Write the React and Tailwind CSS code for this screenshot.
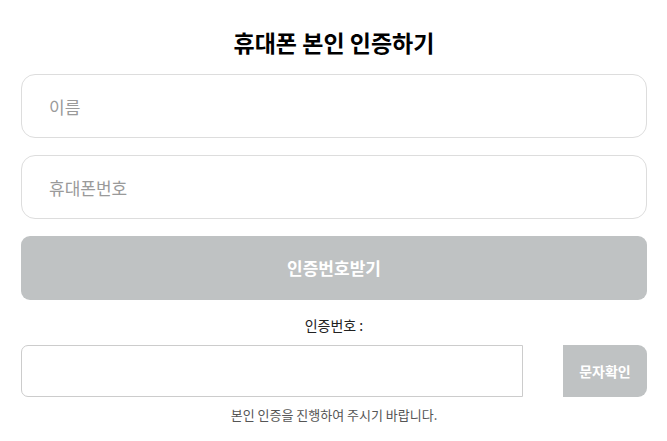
const FONT = { fontFamily: '"Noto Sans CJK KR", "Noto Sans", sans-serif' };

export default function App() {
    return (
        <div className="min-h-screen bg-white pl-[21px] pr-[20px] pt-[25px]" style={FONT}>
            <h1 className="text-center text-[23px] font-bold leading-[34px] text-black">휴대폰 본인 인증하기</h1>

            <div className="mt-[15px] flex flex-col gap-[17px]">
                <input
                    type="text"
                    placeholder="이름"
                    className="h-[64px] w-full rounded-[14px] border border-[#dddddd] px-[27px] text-[17px] text-[#333] placeholder:text-[#9a9a9a] outline-none"
                />
                <input
                    type="text"
                    placeholder="휴대폰번호"
                    className="h-[64px] w-full rounded-[14px] border border-[#dddddd] px-[27px] text-[17px] text-[#333] placeholder:text-[#9a9a9a] outline-none"
                />
                <button className="h-[64px] w-full rounded-[9px] bg-[#bfc2c3] text-[17px] font-bold text-white">
                    인증번호받기
                </button>
            </div>

            <p className="mt-[15px] text-center text-[14px] leading-[20px] text-[#222]">인증번호 :</p>

            <div className="mt-[10px] flex gap-[40px]">
                <input
                    type="text"
                    className="h-[52px] flex-1 rounded-l-[7px] border border-[#cccccc] px-3 text-[15px] outline-none"
                />
                <button className="h-[52px] w-[84px] rounded-r-[9px] bg-[#bfc2c3] text-[14px] font-bold text-white">
                    문자확인
                </button>
            </div>

            <p className="mt-[8px] text-center text-[13px] leading-[20px] text-[#555]">본인 인증을 진행하여 주시기 바랍니다.</p>
        </div>
    );
}
